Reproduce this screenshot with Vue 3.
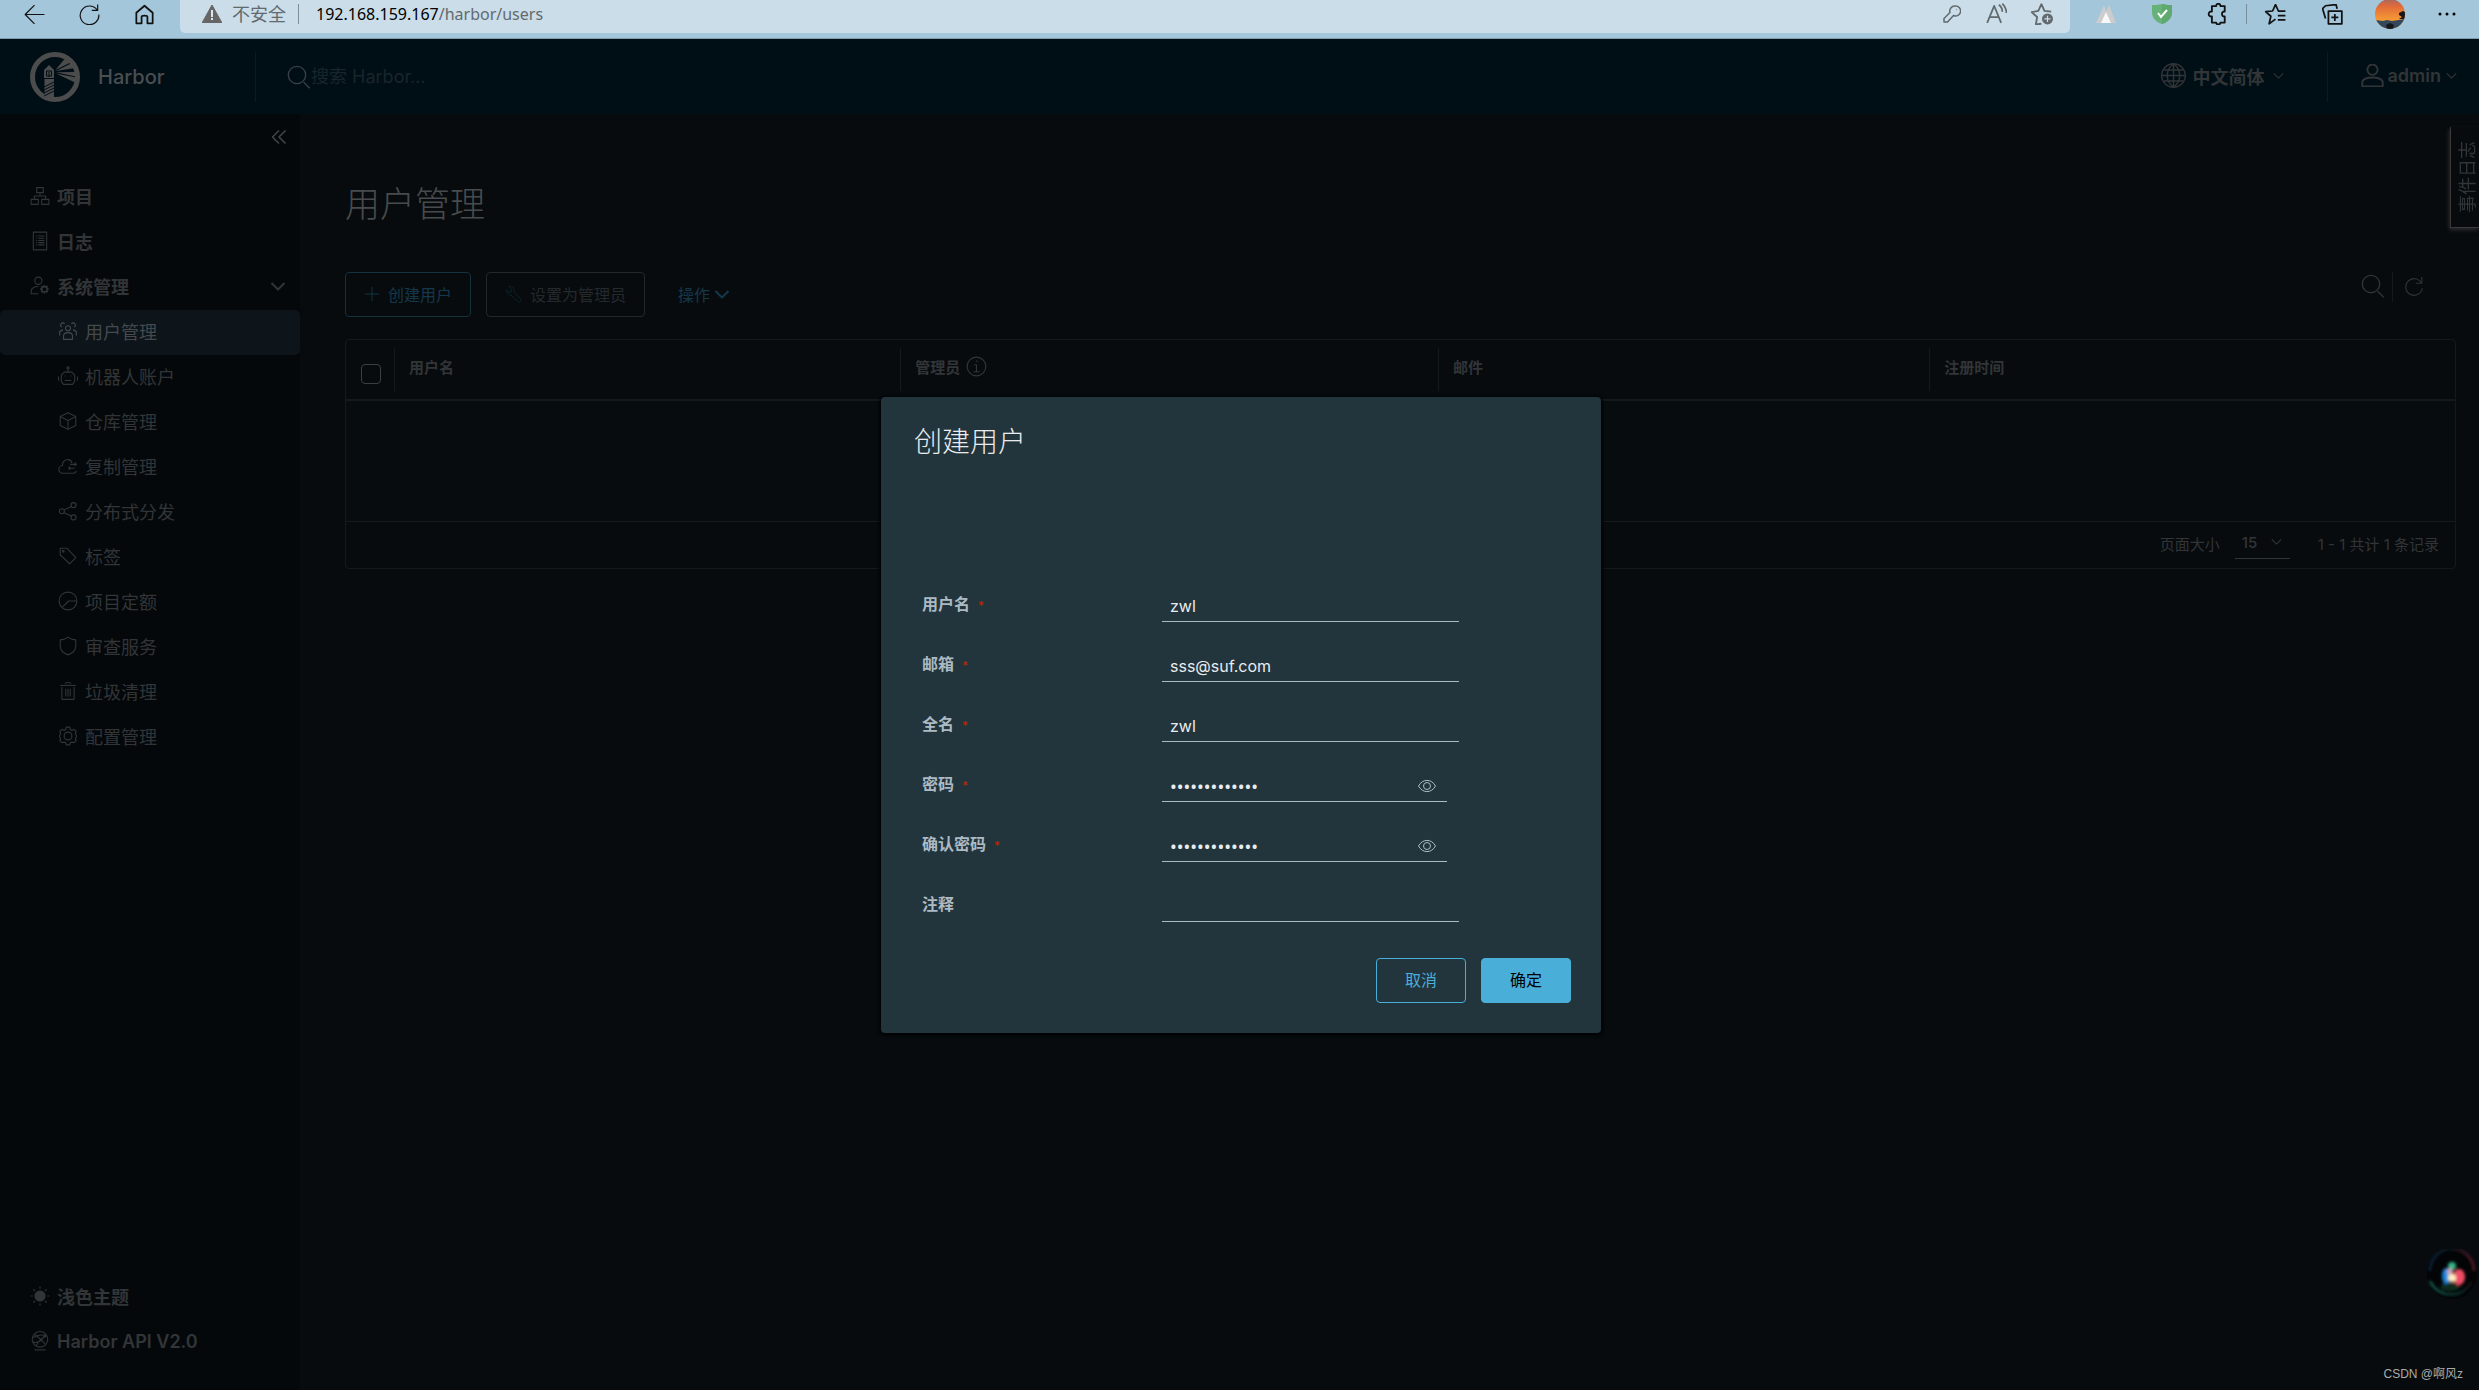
<script setup>
import { h, ref } from 'vue'

// Each icon lives on a 36-unit grid: s = stroked paths, f = filled paths.
const icons = {
  organization: { s: ['M12 3h12v9H12z', 'M2 24h13v9H2z', 'M21 24h13v9H21z', 'M18 12v6M8 24v-6h20v6'] },
  log: { s: ['M6 2h24v32H6z', 'M11 9h2M15 9h11M11 13h2M15 13h11M11 17h2M15 17h11M11 21h2M15 21h11M11 25h2M15 25h11'] },
  admin: {
    s: ['M15 2a6.500 6.500 0 1 1 0 13a6.500 6.500 0 1 1 0-13z', 'M15 32H2v-5c0-4 5-8 13-8'],
    f: ['M24.500 16h3l.6 2.700 2.400-1.500 2.100 2.100-1.500 2.400 2.700.6v3l-2.700.6 1.500 2.400-2.100 2.100-2.400-1.500-.6 2.700h-3l-.6-2.700-2.400 1.500-2.100-2.100 1.500-2.400-2.700-.6v-3l2.700-.6-1.500-2.400 2.100-2.100 2.400 1.500zM26 20.500a3.500 3.500 0 1 0 0 7a3.500 3.500 0 1 0 0-7z']
  },
  users: { s: ['M18 8.500a4.500 4.500 0 1 1 0 9a4.500 4.500 0 1 1 0-9z', 'M10 33v-6c0-4 4-6 8-6s8 2 8 6v6z', 'M12 5a4 4 0 1 0-5 6M24 5a4 4 0 1 1 5 6', 'M3 26v-5c0-3 2-4 6-5M33 26v-5c0-3-2-4-6-5'] },
  robot: { s: ['M11 11h14l5 5v12l-4 5H10l-4-5V16z', 'M18 11V5M18 1.500a2 2 0 1 1 0 4a2 2 0 1 1 0-4z', 'M1 19v7M35 19v7', 'M12 18h2M22 18h2', 'M12 26h12'] },
  cube: { s: ['M18 3l14 7v16l-14 7-14-7V10z', 'M4 10l14 7 14-7M18 17v16'] },
  cloud: { s: ['M22 31H9a7 7 0 0 1-1-14C8 5 23 3 25 13', 'M22 31h5c3 0 5-1 6-4', 'M22 15h11M30 12l3 3-3 3', 'M30 22H19M22 19l-3 3 3 3'] },
  share: { s: ['M28 3a4.500 4.500 0 1 1 0 9a4.500 4.500 0 1 1 0-9z', 'M28 25a4.500 4.500 0 1 1 0 9a4.500 4.500 0 1 1 0-9z', 'M7 14a4.500 4.500 0 1 1 0 9a4.500 4.500 0 1 1 0-9z', 'M11 16l13-6M11 21l13 6'] },
  tag: { s: ['M4 4h12l16 17-11 11L4 16z', 'M9.500 8a1.500 1.500 0 1 1 0 3a1.500 1.500 0 1 1 0-3z'] },
  quota: { s: ['M18 2a16 16 0 1 1 0 32a16 16 0 1 1 0-32z', 'M34 18H19L8 29'] },
  shield: { s: ['M18 2c5 4 9 5 14 5v11c0 8-6 13-14 16C10 31 4 26 4 18V7c5 0 9-1 14-5z'] },
  trash: { s: ['M4 8h28', 'M7 11v22h22V11', 'M13 5c0-3 10-3 10 0', 'M14 14v14M18 14v14M22 14v14'] },
  cog: { s: ['M15 2h6l1 4 3 2 4-2 4 4-2 4 2 3v3l-2 3 2 3-4 4-4-1-3 1-1 4h-6l-1-4-3-1-4 1-4-4 2-3-2-3v-3l2-3-2-4 4-4 4 2 3-2z', 'M18 11a7 7 0 1 1 0 14a7 7 0 1 1 0-14z'] },
  sun: { s: ['M18 1v4M18 31v4M1 18h4M31 18h4M6 6l3 3M27 27l3 3M30 6l-3 3M9 27l-3 3'], f: ['M18 8a10 10 0 1 1 0 20a10 10 0 1 1 0-20z'] },
  api: { s: ['M18 1a14 14 0 1 1 0 28a14 14 0 1 1 0-28z', 'M8 6c6 4 12 10 19 17M30 9c-8 3-15 9-19 18M5 12c8-5 17-6 24-3M5 20c7 2 16 0 22-14', 'M8 34h20'] },
  angles: { s: ['M18 5L5 18l13 13M31 5L18 18l13 13'] },
  chevron: { s: ['M5 12l13 13 13-13'] },
  search: { s: ['M15 2a13 13 0 1 1 0 26a13 13 0 1 1 0-26z', 'M25 26l9 9'] },
  globe: { s: ['M18 1a17 17 0 1 1 0 34a17 17 0 1 1 0-34z', 'M18 1v34M18 1c-12 9-12 25 0 34M18 1c12 9 12 25 0 34M1 18h34M4 10h28M4 26h28'] },
  user: { s: ['M18 1a8 8 0 1 1 0 16a8 8 0 1 1 0-16z', 'M2 35v-7c3-9 29-9 32 0v7z'] },
  plus: { s: ['M18 2v32M2 18h32'] },
  wrench: { s: ['M8 3l5 6-1 5-5 1-4-6c-2 6 2 12 9 11l13 13c4 3 9-1 6-6L18 15C20 7 14 2 8 3z'] },
  info: { s: ['M18 2a16 16 0 1 1 0 32a16 16 0 1 1 0-32z', 'M14 15h4v12M13 27h10', 'M17 9h3'] },
  refresh: { s: ['M31 12A15 15 0 1 0 33 22', 'M32 2v11H21'] },
  eye: { s: ['M1 18C9 3 27 3 35 18C27 33 9 33 1 18z', 'M18 11a7 7 0 1 1 0 14a7 7 0 1 1 0-14z'] },
  back: { s: ['M35 18H2M18 2L2 18l16 16'] },
  reload: { s: ['M31 10A16 16 0 1 0 34 18', 'M32 1v10H22'] },
  home: { s: ['M4 15L18 3l14 12v18h-9V22c0-3-10-3-10 0v11H4z'] },
  key: { s: ['M24 2a10 10 0 1 1-3 19L9 34H2v-7l12-12A10 10 0 0 1 24 2z', 'M26 9h1'] },
  read: { s: ['M2 34L14 5l12 29M6 24h16', 'M22 3c4 3 6 7 6 12M28 1c4 4 7 9 7 16'] },
  star: {
    s: ['M17 34l-9 1 2-12L1 15l11-2L17 2l5 11 11 1'],
    f: ['M27 17a9 9 0 1 0 0 18a9 9 0 1 0 0-18zM26 21h2v4h4v2h-4v4h-2v-4h-4v-2h4z']
  },
  puzzle: { s: ['M8 5h7c0-5 7-5 7 0h7v9c-6-1-6 9 0 8v10h-7c0 4-7 4-7 0H8V22c-7 1-7-9 0-8z'] },
  favorites: { s: ['M18 26L7 34l3-13-9-8 12-1L18 1l5 11h12', 'M22 20h13M22 27h13'] },
  collections: { s: ['M11 12h23v22H11z', 'M22 17v12M16 23h12', 'M6 25L1 8l5-5 18-2 2 7'] }
}

const Icon = (props) => {
  const icon = icons[props.name]
  return h('svg', { viewBox: '0 0 36 36', width: props.size, height: props.size, class: 'icon', 'aria-hidden': 'true' }, [
    ...(icon.s || []).map((d) => h('path', { d, fill: 'none', stroke: 'currentColor', 'stroke-width': props.weight || 2, 'stroke-linejoin': 'round' })),
    ...(icon.f || []).map((d) => h('path', { d, fill: 'currentColor', 'fill-rule': 'evenodd' }))
  ])
}
Icon.props = ['name', 'size', 'weight']

const topLinks = [
  { icon: 'organization', label: '项目' },
  { icon: 'log', label: '日志' }
]
const adminLinks = [
  { icon: 'users', label: '用户管理', active: true },
  { icon: 'robot', label: '机器人账户' },
  { icon: 'cube', label: '仓库管理' },
  { icon: 'cloud', label: '复制管理' },
  { icon: 'share', label: '分布式分发' },
  { icon: 'tag', label: '标签' },
  { icon: 'quota', label: '项目定额' },
  { icon: 'shield', label: '审查服务' },
  { icon: 'trash', label: '垃圾清理' },
  { icon: 'cog', label: '配置管理' }
]
const fields = ref([
  { id: 'username', label: '用户名', type: 'text', value: 'zwl', required: true },
  { id: 'email', label: '邮箱', type: 'text', value: 'sss@suf.com', required: true },
  { id: 'realname', label: '全名', type: 'text', value: 'zwl', required: true },
  { id: 'password', label: '密码', type: 'password', value: 'Harbor1234567', required: true },
  { id: 'confirm', label: '确认密码', type: 'password', value: 'Harbor1234567', required: true },
  { id: 'comment', label: '注释', type: 'text', value: '', required: false }
])
const pageSize = ref('15')
</script>

<template>
  <div class="screen">
    <div class="browser">
      <div class="browser-nav">
        <button aria-label="后退"><Icon name="back" size="21" /></button>
        <button aria-label="刷新"><Icon name="reload" size="21" /></button>
        <button aria-label="主页"><Icon name="home" size="21" weight="3" /></button>
      </div>
      <div class="address">
        <svg class="warning" viewBox="0 0 20 18" width="20" height="18" aria-hidden="true">
          <path d="M10 0L20 18H0z" fill="#666" stroke="#666" stroke-linejoin="round" />
          <path d="M10 5v7M10 13v2" stroke="#dce8ef" stroke-width="2" />
        </svg>
        <span class="insecure">不安全</span>
        <span class="bar"></span>
        <span class="url"><b>192.168.159.167</b>/harbor/users</span>
        <div class="address-tools">
          <button aria-label="密码"><Icon name="key" size="18" weight="3" /></button>
          <button aria-label="朗读"><Icon name="read" size="21" weight="3" /></button>
          <button aria-label="收藏"><Icon name="star" size="22" weight="3" /></button>
        </div>
      </div>
      <div class="browser-tools">
        <button aria-label="扩展">
          <svg viewBox="0 0 20 18" width="20" height="18"><path d="M0 18L8 0l6 18zM6 18L13 0l7 18z" fill="#ccc" /><path d="M5 18l5-11 5 11z" fill="#f7f7f7" /></svg>
        </button>
        <button aria-label="安全">
          <svg viewBox="0 0 20 20" width="20" height="20"><path d="M10 0c4 1 7 1 10 1v7c0 6-4 10-10 12C4 18 0 14 0 8V1c3 0 6 0 10-1z" fill="#67b279" /><path d="M10 0c4 1 7 1 10 1v7c0 6-4 10-10 12z" fill="#5fa970" /><path d="M6 9l3 4 6-7" fill="none" stroke="#fff" stroke-width="2" /></svg>
        </button>
        <button aria-label="插件"><Icon name="puzzle" size="22" weight="3" /></button>
        <span class="bar"></span>
        <button aria-label="收藏夹"><Icon name="favorites" size="21" weight="3" /></button>
        <button aria-label="集锦"><Icon name="collections" size="21" weight="3" /></button>
        <button aria-label="个人资料">
          <svg viewBox="0 0 30 30" width="30" height="30">
            <defs>
              <clipPath id="face"><circle cx="15" cy="15" r="15" /></clipPath>
              <linearGradient id="dusk" x2="0" y2="1"><stop offset="0" stop-color="#a8665e" /><stop offset=".25" stop-color="#e26b38" /><stop offset=".7" stop-color="#f59a36" /></linearGradient>
            </defs>
            <g clip-path="url(#face)">
              <path d="M0 0h30v30H0z" fill="url(#dusk)" />
              <path d="M0 21l8 1 4-1 5 1 13-2v11H0z" fill="#34485a" />
              <path d="M24 14l4-2 2 1v7h-6l3-2-3-2zM11 26l4-2 4 2-1 4h-6z" fill="#16171b" />
            </g>
          </svg>
        </button>
        <button aria-label="更多">
          <svg viewBox="0 0 18 4" width="18" height="4"><circle cx="2" cy="2" r="1.500" /><circle cx="9" cy="2" r="1.500" /><circle cx="16" cy="2" r="1.500" /></svg>
        </button>
      </div>
    </div>

    <header class="header">
      <a class="brand" href="#">
        <svg viewBox="0 0 50 50" width="50" height="50" aria-hidden="true">
          <circle cx="25" cy="25" r="22.500" fill="none" stroke="#4c4c4c" stroke-width="5" />
          <path d="M25.400 18L34.500 7l6 3.500zM26 19l16-8 3 5zM26 20.300L46 20v4.500zM26 21.500l20 4-1 5z" fill="#4c4c4c" />
          <path d="M19 13l5 5v8H14v-8z" fill="#4c4c4c" />
          <path d="M16.500 19h5v5h-5z" fill="none" stroke="#000f16" />
          <path d="M19 20v5" stroke="#000f16" />
          <path d="M14.500 27h9.500v20l-9.500-2z" fill="#4c4c4c" />
          <path d="M14 35l10-5M14 38l10-5M14 41l10-5M14 44l10-5" stroke="#000f16" stroke-width="1" />
        </svg>
        <span>Harbor</span>
      </a>
      <label class="search">
        <Icon name="search" size="24" />
        <input type="text" placeholder="搜索 Harbor..." aria-label="搜索 Harbor" />
      </label>
      <button class="language"><Icon name="globe" size="25" /><span>中文简体</span><Icon name="chevron" size="13" weight="3" /></button>
      <button class="account"><Icon name="user" size="23" weight="3" /><span>admin</span><Icon name="chevron" size="13" weight="3" /></button>
    </header>

    <div class="body">
      <nav class="sidebar">
        <button class="collapse" aria-label="收起"><Icon name="angles" size="18" weight="3" /></button>
        <a v-for="link in topLinks" :key="link.label" class="top-link" href="#"><Icon :name="link.icon" size="20" />{{ link.label }}</a>
        <button class="top-link"><Icon name="admin" size="20" />系统管理<Icon class="toggle" name="chevron" size="18" weight="4" /></button>
        <a v-for="link in adminLinks" :key="link.label" class="sub-link" :class="{ active: link.active }" href="#"><Icon :name="link.icon" size="20" />{{ link.label }}</a>
        <div class="sidebar-foot">
          <button class="top-link"><Icon name="sun" size="20" />浅色主题</button>
          <a class="top-link" href="#"><Icon name="api" size="20" />Harbor API V2.0</a>
        </div>
      </nav>

      <main class="content">
        <h1>用户管理</h1>
        <div class="toolbar">
          <button class="outline"><Icon name="plus" size="16" />创建用户</button>
          <button class="outline disabled" disabled><Icon name="wrench" size="18" />设置为管理员</button>
          <button class="actions">操作<Icon name="chevron" size="18" weight="4" /></button>
          <div class="table-tools">
            <button aria-label="搜索"><Icon name="search" size="24" /></button>
            <button aria-label="刷新列表"><Icon name="refresh" size="20" /></button>
          </div>
        </div>
        <section class="datagrid">
          <table>
            <colgroup><col class="c-check" /><col class="c-name" /><col class="c-admin" /><col class="c-mail" /><col /></colgroup>
            <thead>
              <tr>
                <th class="check"><input type="checkbox" aria-label="全选" /></th>
                <th><div>用户名</div></th>
                <th><div>管理员<Icon name="info" size="21" /></div></th>
                <th><div>邮件</div></th>
                <th><div>注册时间</div></th>
              </tr>
            </thead>
            <tbody><tr><td colspan="5"></td></tr></tbody>
          </table>
          <footer class="pager">
            <label for="page-size">页面大小</label>
            <span class="select">
              <select id="page-size" v-model="pageSize"><option>15</option><option>25</option><option>50</option></select>
              <Icon name="chevron" size="13" weight="3" />
            </span>
            <span class="count">1 - 1 共计 1 条记录</span>
          </footer>
        </section>
      </main>
    </div>

    <button class="event-log"><span>事件日志</span></button>

    <div class="backdrop">
      <form class="modal" role="dialog" aria-labelledby="modal-title" @submit.prevent>
        <h2 id="modal-title">创建用户</h2>
        <div class="fields">
          <div v-for="field in fields" :key="field.id" class="field">
            <label :for="field.id">{{ field.label }}<span v-if="field.required" class="star">*</span></label>
            <div class="control" :class="{ secret: field.type === 'password' }">
              <input :id="field.id" v-model="field.value" :type="field.type" autocomplete="off" />
              <button v-if="field.type === 'password'" type="button" aria-label="显示密码"><Icon name="eye" size="18" /></button>
            </div>
          </div>
        </div>
        <div class="modal-actions">
          <button type="button" class="cancel">取消</button>
          <button type="submit" class="confirm">确定</button>
        </div>
      </form>
    </div>

    <div class="orb">
      <svg viewBox="0 0 50 50" width="50" height="50" aria-hidden="true">
        <defs>
          <linearGradient id="rim"><stop offset="0" stop-color="#102c50" /><stop offset=".45" stop-color="#0a1c22" /><stop offset="1" stop-color="#7a2033" /></linearGradient>
          <linearGradient id="rim-low"><stop offset="0" stop-color="#16705c" /><stop offset=".7" stop-color="#0b3a35" /><stop offset="1" stop-color="#160b10" /></linearGradient>
          <filter id="glow" x="-1" y="-1" width="3" height="3"><feGaussianBlur stdDeviation="1.500" /></filter>
        </defs>
        <circle cx="25" cy="25" r="25" fill="#030405" />
        <g filter="url(#glow)">
          <path d="M3 22a22 22 0 0 1 44 0" fill="none" stroke="url(#rim)" stroke-width="2" />
          <path d="M3 32a23 23 0 0 0 42 0" fill="none" stroke="url(#rim-low)" stroke-width="2" />
          <ellipse cx="23" cy="38" rx="10" ry="4" fill="#08291f" />
          <ellipse cx="19" cy="27" rx="4" ry="8" fill="#1786dc" />
          <ellipse cx="25" cy="17" rx="4" ry="4" fill="#2fb583" />
          <ellipse cx="23" cy="23" rx="3" ry="4" fill="#c9a5b8" />
          <ellipse cx="32" cy="28" rx="6" ry="8" fill="#ef4d63" />
          <ellipse cx="25" cy="29" rx="4" ry="4" fill="#fff0c4" />
        </g>
      </svg>
    </div>
    <div class="watermark">CSDN @啊风z</div>
  </div>
</template>

<style>
body {
  background: #070b0e;
}
</style>

<style scoped>
.screen {
  position: relative;
  display: flex;
  flex-direction: column;
  min-height: 100vh;
  font-family: Inter, "Noto Sans CJK SC", sans-serif;
  font-size: 18px;
  color: #323537;
  background: #070b0e;
}
.screen * {
  box-sizing: border-box;
}
button,
input,
select {
  margin: 0;
  padding: 0;
  border: 0;
  background: none;
  color: inherit;
  font: inherit;
  outline: none;
}
a {
  color: inherit;
  text-decoration: none;
}
.icon {
  flex: none;
}
svg {
  display: block;
}

/* browser chrome */
.browser {
  display: flex;
  height: 39px;
  background: #a3c6db;
  border-bottom: 1px solid #7f9dae;
  color: #111;
}
.browser button {
  display: flex;
  align-items: center;
  justify-content: center;
  height: 28px;
}
.browser-nav {
  display: flex;
  width: 180px;
  padding-left: 7px;
}
.browser-nav button {
  width: 55px;
}
.bar {
  flex: none;
  width: 1px;
  height: 20px;
  background: #7a8f9c;
}
.address {
  display: flex;
  flex: 1;
  align-items: center;
  height: 33px;
  padding: 0 6px 6px 22px;
  background: #cadde8;
  border-radius: 0 0 5px 5px;
  color: #626a6e;
}
.insecure {
  margin: 0 12px 2px 10px;
}
.url {
  margin-left: 17px;
  font-family: "Noto Sans", sans-serif;
  font-size: 16px;
}
.url b {
  font-weight: 400;
  color: #000;
}
.address-tools {
  display: flex;
  margin-left: auto;
}
.address-tools button {
  width: 45px;
}
.browser-tools {
  display: flex;
  align-items: center;
  height: 28px;
  padding: 0 4px 0 8px;
}
.browser-tools button {
  width: 56px;
}
.browser-tools .bar ~ button {
  width: 57px;
}

/* application header */
.header {
  display: flex;
  align-items: center;
  height: 75px;
  background: #000f16;
}
.brand {
  display: flex;
  align-items: center;
  gap: 18px;
  width: 255px;
  padding-left: 30px;
  font-size: 20px;
  font-weight: 500;
  color: #4a4e50;
}
.search {
  display: flex;
  align-items: center;
  height: 50px;
  padding-left: 31px;
  border-left: 1px solid #0b1a21;
  color: #384146;
}
.search input {
  width: 240px;
}
.search input::placeholder {
  color: #19252b;
  opacity: 1;
}
.language,
.account {
  display: flex;
  align-items: center;
  height: 50px;
  padding-bottom: 2px;
  font-weight: 600;
}
.language {
  gap: 7px;
  margin-left: auto;
  padding-right: 42px;
}
.account {
  gap: 4px;
  padding-right: 21px;
  padding-left: 33px;
  border-left: 1px solid #0b1a21;
}

/* sidebar */
.body {
  display: flex;
  flex: 1;
}
.sidebar {
  display: flex;
  flex-direction: column;
  width: 300px;
  padding-bottom: 25px;
  background: #04080b;
}
.collapse {
  align-self: flex-end;
  height: 18px;
  margin: 14px 12px 29px 0;
  color: #42464a;
}
.top-link,
.sub-link {
  display: flex;
  align-items: center;
  width: 100%;
  height: 45px;
  padding-bottom: 3px;
  text-align: left;
}
.top-link {
  gap: 7px;
  padding-right: 13px;
  padding-left: 30px;
  font-weight: 600;
}
.sub-link {
  gap: 7px;
  padding-left: 58px;
}
.active {
  background: #0d151b;
  border-radius: 5px;
  color: #45494c;
}
.toggle {
  margin-left: auto;
}
.sidebar-foot {
  margin-top: auto;
}

/* content */
.content {
  flex: 1;
  padding: 65px 23px 0 45px;
}
h1 {
  margin: 0 0 43px;
  font-size: 35px;
  font-weight: 300;
  line-height: 50px;
  color: #484b4d;
}
.toolbar {
  display: flex;
  gap: 15px;
  height: 45px;
  font-size: 16px;
}
.toolbar button {
  padding-bottom: 2px;
}
.outline {
  display: flex;
  align-items: center;
  gap: 8px;
  padding-right: 18px;
  padding-left: 18px;
  border: 1px solid #15313d;
  border-radius: 4px;
  color: #15384a;
}
.disabled {
  gap: 7px;
  border-color: #232729;
  color: #24292c;
}
.disabled .icon {
  color: #0b222c;
}
.actions {
  display: flex;
  align-items: center;
  gap: 3px;
  margin-left: 18px;
  color: #15384a;
}
.table-tools {
  display: flex;
  height: 30px;
  margin-left: auto;
  padding-right: 32px;
}
.table-tools button {
  padding-right: 7px;
}
.table-tools button + button {
  padding-right: 0;
  padding-left: 11px;
  border-left: 1px solid #16191c;
}
.datagrid {
  margin-top: 22px;
  border: 1px solid #15191b;
  border-radius: 4px;
  font-size: 15px;
}
table {
  width: 100%;
  border-collapse: collapse;
  table-layout: fixed;
}
.c-check {
  width: 48px;
}
.c-name {
  width: 24%;
}
.c-admin {
  width: 25.5%;
}
.c-mail {
  width: 23.3%;
}
th {
  height: 59px;
  padding: 8px 0;
  border-bottom: 2px solid #15191b;
  text-align: left;
  vertical-align: top;
  font-weight: 600;
}
th div {
  display: flex;
  align-items: center;
  gap: 6px;
  height: 43px;
  padding: 0 0 7px 14px;
  border-left: 1px solid #15191b;
}
.check {
  padding: 24px 0 0 15px;
}
.check input {
  display: block;
  width: 20px;
  height: 20px;
  border: 1px solid #3b3f42;
  border-radius: 4px;
  appearance: none;
}
td {
  height: 121px;
  padding: 0;
  background: #070d0f;
}
.pager {
  display: flex;
  align-items: center;
  justify-content: flex-end;
  gap: 15px;
  height: 47px;
  padding-right: 16px;
  padding-bottom: 4px;
  border-top: 1px solid #15191b;
}
.select {
  position: relative;
  width: 55px;
  height: 32px;
  border-bottom: 1px solid #323537;
}
.select select {
  width: 100%;
  height: 100%;
  padding-left: 7px;
  font-weight: 500;
  appearance: none;
}
.select .icon {
  position: absolute;
  top: 8px;
  right: 7px;
  pointer-events: none;
}
.count {
  margin-left: 13px;
}

/* event log tab */
.event-log {
  position: absolute;
  top: 127px;
  right: 0;
  width: 29px;
  height: 101px;
  padding: 4px 0 0 5px;
  border-left: 1px solid #3a3a3a;
  border-bottom: 1px solid #3a3a3a;
  box-shadow: -1px 2px 4px #2c2c2c;
  background: #070b0e;
}
.event-log span {
  display: inline-block;
  writing-mode: vertical-rl;
  text-orientation: sideways;
  transform: rotate(180deg);
  line-height: 23px;
}

/* create-user dialog */
.backdrop {
  position: absolute;
  inset: 39px 0 0;
  display: flex;
  align-items: center;
  justify-content: center;
  padding-left: 3px;
}
.modal {
  width: 720px;
  padding: 31px 30px 30px;
  background: #22343c;
  border-radius: 4px;
  box-shadow: 0 1px 3px 2px #020405;
  font-size: 16px;
  color: #acbac3;
}
h2 {
  margin: 0 0 106px 3px;
  font-size: 28px;
  font-weight: 300;
  line-height: 28px;
  color: #e9ecef;
}
.fields {
  padding-left: 11px;
}
.field {
  display: flex;
  align-items: flex-end;
  height: 60px;
}
.field label {
  width: 240px;
  font-weight: 600;
  line-height: 36px;
}
.star {
  margin-left: 8px;
  font-size: 12px;
  font-weight: 400;
  line-height: 12px;
  color: #c92100;
}
.control {
  display: flex;
  align-items: center;
  width: 297px;
  height: 31px;
  padding: 0 8px;
  border-bottom: 1px solid #acbac3;
}
.control input {
  flex: 1;
  min-width: 0;
  color: #e9ecef;
}
.secret {
  width: 285px;
  padding-right: 11px;
}
.secret input {
  font-family: "Noto Sans", sans-serif;
  font-size: 18px;
}
.modal-actions {
  display: flex;
  justify-content: flex-end;
  gap: 15px;
  margin-top: 36px;
}
.modal-actions button {
  width: 90px;
  height: 45px;
  padding-bottom: 2px;
  border: 1px solid #49afd9;
  border-radius: 4px;
  color: #49afd9;
}
.modal-actions .confirm {
  background: #49afd9;
  color: #000;
}

/* floating extras */
.orb {
  position: absolute;
  right: 2px;
  bottom: 91px;
}
.watermark {
  position: absolute;
  right: 16px;
  bottom: 9px;
  font-family: "Liberation Sans", "Noto Sans CJK SC", sans-serif;
  font-size: 12px;
  color: #a9abac;
}
</style>
